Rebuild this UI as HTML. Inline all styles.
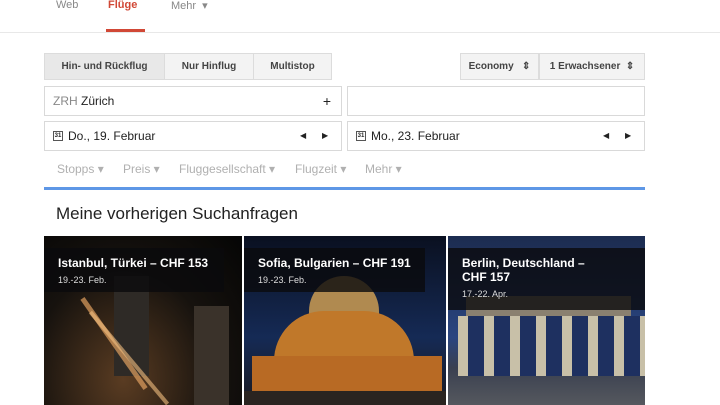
<!DOCTYPE html>
<html><head><meta charset="utf-8"><style>
*{margin:0;padding:0;box-sizing:border-box}
body{width:720px;height:405px;overflow:hidden;background:#fff;font-family:"Liberation Sans",Arial,sans-serif;position:relative}
.a{position:absolute}
.tab{font-size:11px;color:#888;top:-1px}
.btn{position:absolute;top:53px;height:27px;background:#f3f3f3;border:1px solid #dcdcdc;font-size:10px;font-weight:bold;color:#444;display:flex;align-items:center;justify-content:center}
.box{position:absolute;height:30px;border:1px solid #d9d9d9;background:#fff;font-size:12px;color:#222;display:flex;align-items:center;padding-left:8px}
.cal{display:inline-block;width:10px;height:10px;border:1px solid #555;font-size:6px;line-height:8px;text-align:center;margin-right:5px;font-weight:bold}
.arr{position:absolute;font-size:8px;color:#222}
.f{position:absolute;top:162px;font-size:12px;color:#b0b0b0}
.card{position:absolute;top:236px;height:169px;overflow:hidden}
.ov{position:absolute;left:0;top:12px;background:rgba(10,10,12,.8);color:#fff;padding:8px 0 0 14px}
.ov b{font-size:12px;display:block;line-height:14px}
.ov span{font-size:9px;color:#ddd}
</style></head><body>
<div class="a tab" style="left:56px">Web</div>
<div class="a tab" style="left:108px;color:#d14836;font-weight:bold">Flüge</div>
<div class="a" style="left:106px;top:29px;width:39px;height:3px;background:#d14836"></div>
<div class="a tab" style="left:171px">Mehr &nbsp;▾</div>
<div class="a" style="left:0;top:32px;width:720px;height:1px;background:#e8e8e8"></div>

<div class="btn" style="left:44px;width:121px;background:#e8e8e8">Hin- und Rückflug</div>
<div class="btn" style="left:164px;width:90px">Nur Hinflug</div>
<div class="btn" style="left:253px;width:79px">Multistop</div>
<div class="btn" style="left:460px;width:79px">Economy &nbsp;&nbsp;⇕</div>
<div class="btn" style="left:539px;width:106px">1 Erwachsener &nbsp;⇕</div>

<div class="box" style="left:44px;top:86px;width:298px"><span style="color:#888">ZRH&nbsp;</span>Zürich<span style="position:absolute;right:10px;font-size:14px">+</span></div>
<div class="box" style="left:347px;top:86px;width:298px"></div>
<div class="box" style="left:44px;top:121px;width:298px"><span class="cal">31</span>Do., 19. Februar</div>
<span class="arr" style="left:300px;top:131px">◀</span><span class="arr" style="left:322px;top:131px">▶</span>
<div class="box" style="left:347px;top:121px;width:298px"><span class="cal">31</span>Mo., 23. Februar</div>
<span class="arr" style="left:603px;top:131px">◀</span><span class="arr" style="left:625px;top:131px">▶</span>

<div class="f" style="left:57px">Stopps ▾</div>
<div class="f" style="left:123px">Preis ▾</div>
<div class="f" style="left:179px">Fluggesellschaft ▾</div>
<div class="f" style="left:295px">Flugzeit ▾</div>
<div class="f" style="left:365px">Mehr ▾</div>
<div class="a" style="left:44px;top:187px;width:601px;height:3px;background:#5e97e6"></div>
<div class="a" style="left:56px;top:204px;font-size:17px;color:#222">Meine vorherigen Suchanfragen</div>

<div class="card" style="left:44px;width:198px;background:radial-gradient(ellipse at 40% 85%,#5a3c22,#16120e 55%,#050505)">
 <div class="a" style="left:70px;top:40px;width:35px;height:100px;background:#2e2a26"></div>
 <div class="a" style="left:150px;top:70px;width:35px;height:100px;background:#3a322a"></div>
 <div class="a" style="left:15px;top:105px;width:110px;height:5px;background:#e0a060;transform:rotate(55deg);opacity:.7"></div>
 <div class="a" style="left:25px;top:120px;width:120px;height:4px;background:#f3c080;transform:rotate(50deg);opacity:.6"></div>
 <div class="ov" style="width:180px;height:44px"><b>Istanbul, Türkei – CHF 153</b><span>19.-23. Feb.</span></div>
</div>
<div class="card" style="left:244px;width:202px;background:linear-gradient(#0a1020,#152a55 60%,#1a1a20)">
 <div class="a" style="left:65px;top:40px;width:70px;height:45px;border-radius:35px 35px 0 0;background:#b08a50"></div>
 <div class="a" style="left:30px;top:75px;width:140px;height:60px;border-radius:50px 50px 0 0;background:#c0782a"></div>
 <div class="a" style="left:8px;top:120px;width:190px;height:35px;background:#b86a24"></div>
 <div class="a" style="left:0;top:155px;width:202px;height:14px;background:#2a2420"></div>
 <div class="ov" style="width:181px;height:44px"><b>Sofia, Bulgarien – CHF 191</b><span>19.-23. Feb.</span></div>
</div>
<div class="card" style="left:448px;width:197px;background:linear-gradient(#1c2c50,#2a4580 60%,#3a4050 78%,#55585e)">
 <div class="a" style="left:18px;top:60px;width:165px;height:20px;background:#8a8070"></div>
 <div class="a" style="left:10px;top:80px;width:187px;height:60px;background:repeating-linear-gradient(90deg,#c8c0a8 0 10px,#1e3060 10px 26px)"></div>
 <div class="ov" style="width:197px;height:62px"><b>Berlin, Deutschland –<br>CHF 157</b><span>17.-22. Apr.</span></div>
</div>
</body></html>
